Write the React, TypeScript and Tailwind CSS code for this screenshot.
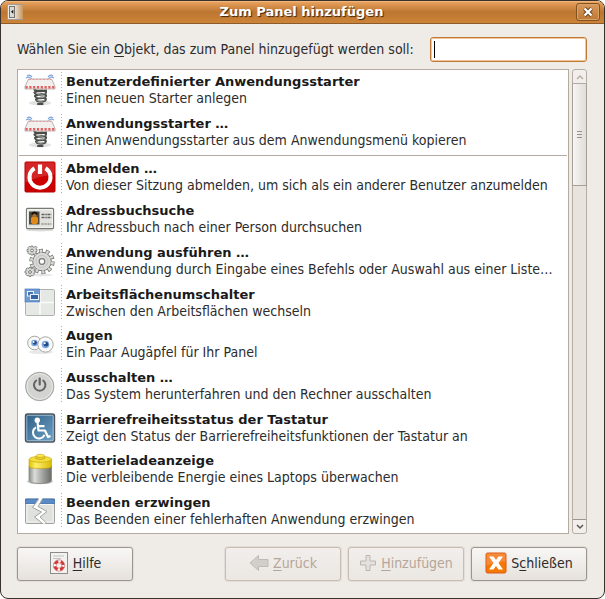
import type { ReactNode } from "react";

const TEXT = "font-['DejaVu_Sans_Condensed','DejaVu_Sans',sans-serif] text-[14px] leading-[17px]";
const BOLD = "font-['DejaVu_Sans',sans-serif] text-[13px] leading-[17px] font-bold";

function SpringIcon() {
  return (
    <svg viewBox="0 0 32 32" className="size-8">
      <ellipse cx="16" cy="29" rx="11" ry="2.500" fill="#e2e2e2" />
      <g fill="none" stroke="#86abdf" strokeWidth="1.300">
        <path d="M2 4q3-2 5.500.500M3 1.800q3-1.500 5 1M30 4q-3-2-5.500.500M29 1.800q-3-1.500-5 1" />
      </g>
      <g fill="none" strokeLinecap="round">
        <path d="M10.500 15.500c2 2.500 10 1.500 11.500 1M10.500 18.500c1 3 10.500 3 11.500 0s-9-2-11.500 0M11 22c1 3 10 3 11 0s-8.500-2-11 0M12 25.500c1 3 9 3 9.800 0s-7.800-2-9.800 0M18.500 30h-4.500" stroke="#4a4d47" strokeWidth="2.200" />
        <path d="M12 19.200c2 1.500 7 1.500 9 0M12.500 22.700c2 1.500 6.500 1.500 8.500 0M13 26.200c2 1.500 5.500 1.500 7.500 0" stroke="#aeb1ab" strokeWidth=".8" />
      </g>
      <path d="M4.500 5h23l3.500 7.500V15H1v-2.500z" fill="#f1f0ee" stroke="#b3a9a7" strokeWidth=".9" />
      <path d="M5 5.500h22" stroke="#e99a9a" strokeWidth="1" strokeDasharray="2 1.500" />
      <path d="M1.500 13.300h29" stroke="#e55a5a" strokeWidth="2.400" strokeDasharray="2.200 1.600" />
    </svg>
  );
}

function LogoutIcon() {
  return (
    <svg viewBox="0 0 32 32" className="size-8">
      <rect x="1" y="1" width="30" height="30" rx="1" fill="#cc0000" stroke="#b20000" />
      <path d="M1.500 1.500h29v12q-14 1-29 8z" fill="#d83a3a" opacity=".65" />
      <path d="M10.500 7.300a10.500 10.500 0 1 0 11 0" fill="none" stroke="#fff" strokeWidth="4" />
      <path d="M16 3.500v9.500" stroke="#fff" strokeWidth="4.200" />
    </svg>
  );
}

function CardIcon() {
  return (
    <svg viewBox="0 0 32 32" className="size-8">
      <ellipse cx="16" cy="27" rx="14" ry="1.500" fill="#ddd" />
      <rect x="2.500" y="5.500" width="27" height="20" rx="1" fill="#e0e0dd" stroke="#777973" strokeWidth="1.300" />
      <rect x="3.700" y="6.700" width="24.600" height="17.600" fill="none" stroke="#fafafa" />
      <rect x="5" y="8.500" width="10.500" height="13" fill="#4b4a47" />
      <path d="M7 19.500V15l1.500-1.500h4L14 15v4.500L12.500 21h-4z" fill="#e28a18" />
      <circle cx="10.400" cy="12" r="2.200" fill="#a8702f" />
      <path d="M7.800 11.500q2.700-4 5.400 0" stroke="#15120f" strokeWidth="1.800" fill="none" />
      <path d="M17.500 11.500h10M17.500 14.500h10" stroke="#60615d" strokeWidth="1.400" strokeDasharray="3 .8 1.500 .6" />
      <path d="M17.500 21h10" stroke="#a2a49f" strokeWidth="2" strokeDasharray="2 1" />
    </svg>
  );
}

function GearIcon() {
  return (
    <svg viewBox="0 0 32 32" className="size-8">
      <ellipse cx="17" cy="30" rx="12" ry="1.500" fill="#e8e8e8" />
      <g fill="none" stroke="#777974">
        <circle cx="18" cy="16.500" r="10.800" strokeWidth="3.800" strokeDasharray="3.900 2.886" />
        <circle cx="18" cy="16.500" r="9.300" fill="#d9dad7" strokeWidth="1" />
        <circle cx="18" cy="16.500" r="10.500" stroke="#d9dad7" strokeWidth="3" strokeDasharray="2.300 4.297" strokeDashoffset="-.75" />
        <circle cx="18" cy="16.500" r="6" stroke="#c3c5c0" />
        <circle cx="18" cy="16.500" r="2.800" fill="#fff" strokeWidth="1.200" />
      </g>
      {["8 5.500", "6 27"].map((at) => (
        <g key={at} transform={`translate(${at})`}>
          <path d="M-1-4.500h2v1.200h1.200L4-4.200l1 1-1 1.500V-1H5v2H3.800l.3 1.500-1.300 1.400L1 3.300V4.500h-2V3.300l-2 .5-1.200-1.200.8-1.600H-5v-2h1.300L-4-3l1.200-1.200L-1-3.300z" fill="#dcddda" stroke="#777974" strokeWidth=".8" />
          <circle r="1.400" fill="#fff" stroke="#666" strokeWidth=".9" />
        </g>
      ))}
    </svg>
  );
}

function WorkspaceIcon() {
  return (
    <svg viewBox="0 0 32 32" className="size-8">
      <rect x="1.500" y="2.500" width="29" height="26" rx="1" fill="#e6e8e5" stroke="#b0b2ae" />
      <path d="M16 3v25M2 15.500h28" stroke="#fbfbfb" strokeWidth="1.400" />
      <rect x="1" y="2" width="14.500" height="13" fill="#6f9bd0" stroke="#4a7ab8" strokeWidth=".7" />
      <rect x="3.500" y="4.500" width="6" height="4.500" fill="#4375b4" stroke="#eaf1fa" />
      <rect x="6.500" y="7.500" width="8" height="5" fill="#3465a4" stroke="#eaf1fa" />
    </svg>
  );
}

function EyesIcon() {
  return (
    <svg viewBox="0 0 32 32" className="size-8">
      <ellipse cx="17" cy="24" rx="12" ry="2" fill="#e8e8e8" />
      <circle cx="10.500" cy="15" r="6.800" fill="#f8f8f7" stroke="#a5a7a3" />
      <circle cx="21.500" cy="16.500" r="7.700" fill="#fafafa" stroke="#a5a7a3" />
      <circle cx="10.500" cy="15" r="3.300" fill="#7aa5dc" />
      <circle cx="21.500" cy="16.500" r="3.800" fill="#7aa5dc" />
      <circle cx="10.800" cy="14.800" r="2" fill="#204a87" />
      <circle cx="22" cy="16.300" r="2.300" fill="#204a87" />
      <circle cx="9.700" cy="14" r=".9" fill="#fff" />
      <circle cx="20.700" cy="15.300" r="1" fill="#fff" />
    </svg>
  );
}

function ShutdownIcon() {
  return (
    <svg viewBox="0 0 32 32" className="size-8">
      <circle cx="15.700" cy="16.500" r="14.200" fill="#c9cac7" stroke="#a1a39f" />
      <circle cx="15.700" cy="16.500" r="12.800" fill="#d3d4d1" stroke="#ecedeb" />
      <path d="M12.200 10.500a5.700 5.700 0 1 0 7 0" fill="none" stroke="#62645f" strokeWidth="2" strokeLinecap="round" />
      <path d="M15.700 8.500v6" stroke="#62645f" strokeWidth="2.200" strokeLinecap="round" />
    </svg>
  );
}

function AccessIcon() {
  return (
    <svg viewBox="0 0 32 32" className="size-8">
      <defs>
        <linearGradient id="access" x1="0" y1="0" x2="1" y2="1">
          <stop offset="0" stopColor="#2f5e83" />
          <stop offset="1" stopColor="#6fa3c7" />
        </linearGradient>
      </defs>
      <rect x="1.500" y="2" width="29" height="28" rx="2" fill="url(#access)" stroke="#50545a" strokeWidth="1.400" />
      <rect x="2.800" y="3.300" width="26.400" height="25.400" rx="1" fill="none" stroke="#a8c6dc" strokeWidth=".8" />
      <circle cx="13.300" cy="8.300" r="2.700" fill="#fff" />
      <path d="M13.500 10l1 8.500h6.500l3 6.500 2.500-1M14.500 14.200h6" fill="none" stroke="#fff" strokeWidth="2.200" strokeLinejoin="round" />
      <path d="M12 15.300a6 6 0 1 0 8.500 7.500" fill="none" stroke="#fff" strokeWidth="2" />
    </svg>
  );
}

function BatteryIcon() {
  return (
    <svg viewBox="0 0 32 32" className="size-8">
      <defs>
        <linearGradient id="cell">
          <stop offset="0" stopColor="#8c8e8a" />
          <stop offset=".25" stopColor="#dcddda" />
          <stop offset=".6" stopColor="#a2a4a0" />
          <stop offset="1" stopColor="#696b67" />
        </linearGradient>
        <linearGradient id="cap">
          <stop offset="0" stopColor="#e0c000" />
          <stop offset=".3" stopColor="#fff06a" />
          <stop offset="1" stopColor="#d8ba08" />
        </linearGradient>
      </defs>
      <ellipse cx="16" cy="28.500" rx="13" ry="2.800" fill="#c9c9c9" />
      <path d="M5 13v14q0 3.500 11.300 3.500T27.500 27V13z" fill="url(#cell)" stroke="#858783" strokeWidth=".8" />
      <path d="M5 6.500v6.800q0 2.200 11.300 2.200t11.200-2.200V6.500z" fill="url(#cap)" stroke="#c4a000" strokeWidth=".6" />
      <ellipse cx="16.300" cy="6.300" rx="11.200" ry="3" fill="#f3de3e" stroke="#c9a80a" strokeWidth=".7" />
      <path d="M12 3v2.700q4.200 1.600 8.600 0V3z" fill="#e9d02a" stroke="#b89805" strokeWidth=".6" />
      <ellipse cx="16.300" cy="2.800" rx="4.300" ry="1.500" fill="#fbea62" stroke="#c4a000" strokeWidth=".6" />
    </svg>
  );
}

function ForceQuitIcon() {
  return (
    <svg viewBox="0 0 32 32" className="size-8">
      <rect x="1.500" y="4" width="29" height="24.500" rx="1" fill="#dfe1de" stroke="#a0a29e" />
      <path d="M1.500 4h29v4.500h-29z" fill="#5b8bc5" stroke="#3f6fae" strokeWidth=".8" />
      <path d="M3 9.500h26v17.500H3z" fill="none" stroke="#f5f5f4" />
      <path d="M15 3l-6 9.500 9 4.500-7 5 9 7 2.500-1.500-6.500-5.500 7-5.500-9-5L18.500 3z" fill="#fff" />
      <path d="M14.500 4.500l-6 8 9 4.500-7 5 8 6.500M18.500 4.500l-4.500 7 9 5-7 5.500 6.500 6" fill="none" stroke="#a2a4a1" />
    </svg>
  );
}

type Entry = { icon: ReactNode; title: string; text: string };

const launchers: Entry[] = [
  { icon: <SpringIcon />, title: "Benutzerdefinierter Anwendungsstarter", text: "Einen neuen Starter anlegen" },
  { icon: <SpringIcon />, title: "Anwendungsstarter …", text: "Einen Anwendungsstarter aus dem Anwendungsmenü kopieren" },
];

const applets: Entry[] = [
  { icon: <LogoutIcon />, title: "Abmelden …", text: "Von dieser Sitzung abmelden, um sich als ein anderer Benutzer anzumelden" },
  { icon: <CardIcon />, title: "Adressbuchsuche", text: "Ihr Adressbuch nach einer Person durchsuchen" },
  { icon: <GearIcon />, title: "Anwendung ausführen …", text: "Eine Anwendung durch Eingabe eines Befehls oder Auswahl aus einer Liste…" },
  { icon: <WorkspaceIcon />, title: "Arbeitsflächenumschalter", text: "Zwischen den Arbeitsflächen wechseln" },
  { icon: <EyesIcon />, title: "Augen", text: "Ein Paar Augäpfel für Ihr Panel" },
  { icon: <ShutdownIcon />, title: "Ausschalten …", text: "Das System herunterfahren und den Rechner ausschalten" },
  { icon: <AccessIcon />, title: "Barrierefreiheitsstatus der Tastatur", text: "Zeigt den Status der Barrierefreiheitsfunktionen der Tastatur an" },
  { icon: <BatteryIcon />, title: "Batterieladeanzeige", text: "Die verbleibende Energie eines Laptops überwachen" },
  { icon: <ForceQuitIcon />, title: "Beenden erzwingen", text: "Das Beenden einer fehlerhaften Anwendung erzwingen" },
];

function Row({ icon, title, text }: Entry) {
  return (
    <li className="flex min-h-10 flex-1 items-stretch pb-0.5">
      <span className="flex w-[43px] shrink-0 items-center justify-center">{icon}</span>
      <span className="my-0.5 w-px shrink-0 bg-[repeating-linear-gradient(#b0b0b0_0_1px,transparent_1px_3px)]" />
      <span className="flex min-w-0 flex-col justify-center pl-1">
        <span className={`${BOLD} truncate text-[#1a1a1a]`}>{title}</span>
        <span className="truncate">{text}</span>
      </span>
    </li>
  );
}

function ActionButton({ icon, children, disabled = false }: { icon: ReactNode; children: ReactNode; disabled?: boolean }) {
  return (
    <button
      type="button"
      disabled={disabled}
      className="flex h-[34px] w-[116px] items-center justify-center gap-1 rounded-[3px] border border-[#9d968e] bg-linear-to-b from-[#f8f7f5] to-[#e6e1dc] pb-0.5 whitespace-nowrap shadow-[0_0_0_1px_#e2ddd8] disabled:border-[#c9bcb2] disabled:from-[#f1eeeb] disabled:to-[#ebe7e3] disabled:text-[#b5a699]"
    >
      {icon}
      <span>{children}</span>
    </button>
  );
}

export default function App() {
  return (
    <div className={`${TEXT} h-screen min-h-[560px] bg-white text-[#2c2c2c]`}>
      <div className="flex h-full flex-col overflow-hidden rounded-lg border border-[#3b322b] bg-[#efebe7]">
        <header className="flex h-[23px] shrink-0 items-center border-b border-[#8c5a2b] bg-linear-to-b from-[#eba662] via-[#bd7630] to-[#cc8438] pr-1 pl-1.5 shadow-[inset_0_1px_0_#f0b67c]">
          <svg viewBox="0 0 16 16" className="size-4">
            <defs>
              <linearGradient id="drawer">
                <stop offset=".4" stopColor="#ebe9e4" />
                <stop offset="1" stopColor="#c9965c" />
              </linearGradient>
            </defs>
            <path d="M.5.500H16v15H.5z" fill="url(#drawer)" />
            <path d="M16 .5H.5v15H16" fill="none" stroke="#a39d94" />
            <rect x="2.500" y="2.500" width="5" height="11" fill="#dcdad5" stroke="#77746d" />
            <path d="M6.300 5.800v4L4 7.800z" fill="#111" />
          </svg>
          <h1 className={`${BOLD} flex-1 pb-0.5 pl-1 text-center text-white [text-shadow:1px_1px_1px_#3c2410]`}>Zum Panel hinzufügen</h1>
          <button type="button" aria-label="Schließen" className="flex h-[18px] w-6 items-center justify-center rounded-[3px] border border-[#81521f] bg-linear-to-b from-[#d99a5c] to-[#bd7833] shadow-[inset_0_0_0_1px_#dba268]">
            <svg viewBox="0 0 10 10" className="size-2.5">
              <path d="M1.500 1.500l7 7m0-7l-7 7" stroke="#5e3a17" strokeWidth="4" />
              <path d="M1.500 1.500l7 7m0-7l-7 7" stroke="#fff" strokeWidth="2.400" />
            </svg>
          </button>
        </header>

        <main className="flex min-h-0 flex-1 flex-col pt-3 pr-[17px] pb-[17px] pl-4">
          <div className="flex h-[26px] shrink-0 items-center gap-4">
            <label htmlFor="search" className="whitespace-nowrap">
              Wählen Sie ein <u className="underline-offset-2">O</u>bjekt, das zum Panel hinzugefügt werden soll:
            </label>
            <div className="relative flex min-w-0 flex-1">
              <input
                id="search"
                type="text"
                className="h-[25px] w-full min-w-0 rounded-[3px] border border-[#c17a35] bg-white px-1 caret-transparent outline-none shadow-[inset_0_0_0_1px_#f0c79c]"
              />
              <span aria-hidden="true" className="pointer-events-none absolute inset-y-1 left-1 w-px bg-black" />
            </div>
          </div>

          <div className="mt-[7px] flex min-h-0 flex-1 gap-[3px]">
            <ul id="items" className="flex min-w-0 flex-1 flex-col overflow-hidden border border-[#b5aaa0] bg-white">
              {launchers.map((entry) => (
                <Row key={entry.title} {...entry} />
              ))}
              <li className="mx-px shrink-0 pt-0.5 pb-px">
                <hr className="border-[#b5aaa0]" />
              </li>
              {applets.map((entry) => (
                <Row key={entry.title} {...entry} />
              ))}
            </ul>
            <div role="scrollbar" aria-controls="items" aria-valuenow={0} className="flex w-[15px] shrink-0 flex-col rounded-[3px] border border-[#b5aca4] bg-[#e8e3df]">
              <span className="flex h-3.5 items-center justify-center rounded-t-[3px] border-b border-[#b2aaa2] bg-[#f1eeeb]">
                <svg viewBox="0 0 8 6" className="h-1.5 w-2"><path d="M1 5l3-3 3 3" fill="none" stroke="#bcb0a5" strokeWidth="1.500" /></svg>
              </span>
              <span className="flex h-[102px] flex-col items-center justify-center gap-0.5 border-b border-[#a69f97] bg-linear-to-r from-[#f7f6f4] to-[#e1dcd7] shadow-[-1px_0_0_#a69f97,1px_0_0_#a69f97]">
                <i className="h-px w-[5px] bg-[#99918a]" />
                <i className="h-px w-[5px] bg-[#99918a]" />
                <i className="h-px w-[5px] bg-[#99918a]" />
              </span>
              <span className="flex-1" />
              <span className="flex h-3.5 items-center justify-center rounded-b-[3px] border-t border-[#9d968e] bg-[#f1eeeb]">
                <svg viewBox="0 0 8 6" className="h-1.5 w-2"><path d="M1 1l3 3 3-3" fill="none" stroke="#5c5650" strokeWidth="1.500" /></svg>
              </span>
            </div>
          </div>

          <footer className="mt-[13px] flex shrink-0 gap-[7px]">
            <ActionButton
              icon={
                <svg viewBox="0 0 20 22" className="h-[22px] w-5">
                  <rect x="1.500" y=".5" width="17" height="21" fill="#f2f2f0" stroke="#8a8c88" />
                  <path d="M4 4h11M4 6.500h8" stroke="#c2c4c0" />
                  <circle cx="10" cy="13.500" r="4.300" fill="none" stroke="#fff" strokeWidth="3.200" />
                  <circle cx="10" cy="13.500" r="4.300" fill="none" stroke="#d83434" strokeWidth="2.800" strokeDasharray="4.200 2.554" strokeDashoffset="-1.300" />
                  <circle cx="10" cy="13.500" r="5.700" fill="none" stroke="#c86666" strokeWidth=".7" />
                  <circle cx="10" cy="13.500" r="2.700" fill="none" stroke="#c86666" strokeWidth=".6" />
                </svg>
              }
            >
              <u className="underline-offset-2">H</u>ilfe
            </ActionButton>
            <span className="flex-1" />
            <ActionButton
              disabled
              icon={
                <svg viewBox="0 0 20 18" className="h-[18px] w-5">
                  <path d="M1 9L9.500 1.500v4H19v7H9.500v4z" fill="#d2cfcb" stroke="#bfbab4" strokeLinejoin="round" />
                </svg>
              }
            >
              <u className="underline-offset-2">Z</u>urück
            </ActionButton>
            <ActionButton
              disabled
              icon={
                <svg viewBox="0 0 18 18" className="size-[18px]">
                  <path d="M7 1.500h4V7h5.500v4H11v5.500H7V11H1.500V7H7z" fill="#e4e1dd" stroke="#bab5af" strokeLinejoin="round" />
                </svg>
              }
            >
              <u className="underline-offset-2">H</u>inzufügen
            </ActionButton>
            <ActionButton
              icon={
                <svg viewBox="0 0 22 22" className="size-[22px]">
                  <rect x="1" y="1" width="20" height="20" rx="1.500" fill="#f57900" stroke="#d9591c" />
                  <path d="M1.500 1.500h19v8q-9 0-19 4z" fill="#f79250" opacity=".7" />
                  <path d="M4 4.500h4.500L11 8l2.500-3.500H18L13.500 11l4.500 6.500h-4.500L11 14l-2.500 3.500H4L8.500 11z" fill="#fff" />
                </svg>
              }
            >
              S<u className="underline-offset-2">c</u>hließen
            </ActionButton>
          </footer>
        </main>
      </div>
    </div>
  );
}
